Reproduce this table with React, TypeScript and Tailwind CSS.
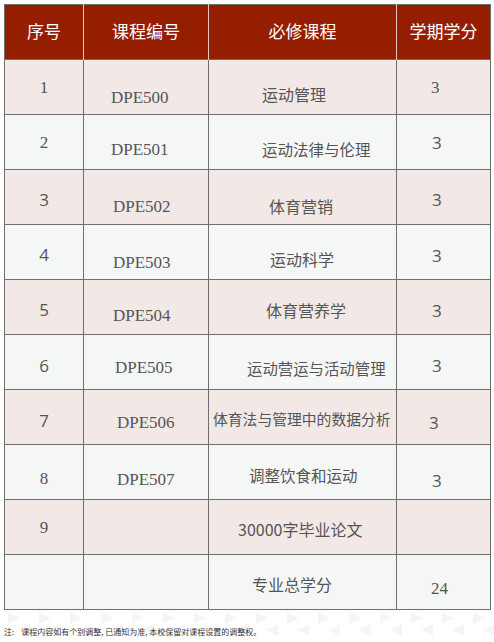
import React from 'react';

type Course = {
  no: string;
  code: string;
  name: string;
  credit: string;
  bg: string;
  noCls: string;
  codeCls: string;
  nameCls: string;
  creditCls: string;
};

const serif = 'font-["Liberation_Serif","Noto_Sans_CJK_SC",serif]';
const sans = 'font-["Open_Sans","Noto_Sans_CJK_SC",sans-serif]';

// 必修课程列表（偏移按原图微调）
const courses: Course[] = [
  { no: '1', code: 'DPE500', name: '运动管理', credit: '3', bg: 'bg-[#f2e8e6]', noCls: `${serif} pt-[17px]`, codeCls: 'pt-[27px] pl-[27px]', nameCls: 'pt-[23px] pl-[53px] text-[16px]', creditCls: `${serif} pt-[17px] pl-[34px]` },
  { no: '2', code: 'DPE501', name: '运动法律与伦理', credit: '3', bg: 'bg-[#f5f7f6]', noCls: `${serif} pt-[17px]`, codeCls: 'pt-[24px] pl-[27px]', nameCls: 'pt-[23px] pl-[53px] text-[15.5px]', creditCls: `${sans} pt-[17px] pl-[35px]` },
  { no: '3', code: 'DPE502', name: '体育营销', credit: '3', bg: 'bg-[#f2e8e6]', noCls: `${sans} pt-[19px]`, codeCls: 'pt-[26px] pl-[29px]', nameCls: 'pt-[25px] pl-[60px] text-[16px]', creditCls: `${sans} pt-[19px] pl-[35px]` },
  { no: '4', code: 'DPE503', name: '运动科学', credit: '3', bg: 'bg-[#f5f7f6]', noCls: `${sans} pt-[19px]`, codeCls: 'pt-[27px] pl-[29px]', nameCls: 'pt-[23px] pl-[61px] text-[16px]', creditCls: `${sans} pt-[20px] pl-[35px]` },
  { no: '5', code: 'DPE504', name: '体育营养学', credit: '3', bg: 'bg-[#f2e8e6]', noCls: `${sans} pt-[19px]`, codeCls: 'pt-[25px] pl-[29px]', nameCls: 'pt-[19px] pl-[57px] text-[16px]', creditCls: `${sans} pt-[20px] pl-[35px]` },
  { no: '6', code: 'DPE505', name: '运动营运与活动管理', credit: '3', bg: 'bg-[#f5f7f6]', noCls: `${sans} pt-[20px]`, codeCls: 'pt-[22px] pl-[31px]', nameCls: 'pt-[22px] pl-[38px] text-[15.4px]', creditCls: `${sans} pt-[20px] pl-[35px]` },
  { no: '7', code: 'DPE506', name: '体育法与管理中的数据分析', credit: '3', bg: 'bg-[#f2e8e6]', noCls: `${sans} pt-[20px]`, codeCls: 'pt-[22px] pl-[33px]', nameCls: 'pt-[18px] pl-[4px] text-[14.8px]', creditCls: `${sans} pt-[22px] pl-[32px]` },
  { no: '8', code: 'DPE507', name: '调整饮食和运动', credit: '3', bg: 'bg-[#f5f7f6]', noCls: `${serif} pt-[23px]`, codeCls: 'pt-[24px] pl-[33px]', nameCls: 'pt-[19px] pl-[40px] text-[15.5px]', creditCls: `${sans} pt-[25px] pl-[35px]` },
  { no: '9', code: '', name: '30000字毕业论文', credit: '', bg: 'bg-[#f2e8e6]', noCls: `${serif} pt-[17px]`, codeCls: '', nameCls: 'pt-[18px] pl-[29px] text-[16px]', creditCls: '' },
  { no: '', code: '', name: '专业总学分', credit: '24', bg: 'bg-[#f5f7f6]', noCls: '', codeCls: '', nameCls: 'pt-[18px] pl-[43px] text-[16px]', creditCls: `${serif} pt-[23px] pl-[34px]` },
];

const headers = ['序号', '课程编号', '必修课程', '学期学分'];
const widths = ['w-[79px]', 'w-[125px]', 'w-[188px]', 'w-[94px]'];

// 背景的浅色三角纹
const Pattern: React.FC = () => (
  <svg className="absolute inset-0 h-full w-full" viewBox="0 0 494 33" preserveAspectRatio="none">
    {[0, 1, 2, 3, 4, 5, 6, 7, 8, 9, 10, 11, 12, 13, 14, 15].map(i => (
      <g key={i} fill="#f5f5f5">
        <polygon points={`${i * 31 + 8},2 ${i * 31 + 20},8 ${i * 31 + 8},14`} />
        <polygon points={`${i * 31 + 30},14 ${i * 31 + 18},20 ${i * 31 + 30},26`} />
      </g>
    ))}
  </svg>
);

const App: React.FC = () => {
  return (
    <div className={`w-[494px] h-[642px] bg-white ${sans} overflow-hidden`}>
      <div className="pt-[4px] pl-[4px]">
        <table className="table-fixed border-collapse w-[486px] border border-[#6e6e6e]">
          <thead>
            <tr className="bg-[#951e00] h-[55px]">
              {headers.map((h, i) => (
                <th
                  key={h}
                  className={`${widths[i]} p-0 border-x border-[#e9c9bf] text-white font-normal text-[17px] leading-[22px] text-center align-middle ${i === 0 ? 'border-l-[#6e6e6e]' : ''} ${i === 3 ? 'border-r-[#6e6e6e]' : ''}`}
                >
                  {h}
                </th>
              ))}
            </tr>
          </thead>
          <tbody>
            {courses.map((c, idx) => (
              <tr key={idx} className={`${c.bg} h-[55px] text-[#555555]`}>
                <td className="p-0 align-top border border-[#6e6e6e]">
                  <div className={`h-[54px] text-center text-[17px] leading-[22px] ${c.noCls}`}>{c.no}</div>
                </td>
                <td className="p-0 align-top border border-[#6e6e6e]">
                  <div className={`h-[54px] text-[17px] leading-[22px] ${serif} ${c.codeCls}`}>{c.code}</div>
                </td>
                <td className="p-0 align-top border border-[#6e6e6e]">
                  <div className={`h-[54px] leading-[22px] whitespace-nowrap font-["Noto_Sans_CJK_SC",sans-serif] ${c.nameCls}`}>{c.name}</div>
                </td>
                <td className="p-0 align-top border border-[#6e6e6e]">
                  <div className={`h-[54px] text-[17px] leading-[22px] ${c.creditCls}`}>{c.credit}</div>
                </td>
              </tr>
            ))}
          </tbody>
        </table>
      </div>
      <div className="relative h-[33px] w-full">
        <Pattern />
        <p className="relative pt-[17px] pl-[4px] text-[8px] leading-[10px] text-[#333333] font-['Noto_Sans_CJK_SC',sans-serif] flex gap-[7px]">
          <span>注:</span>
          <span>课程内容如有个别调整, 已通知为准, 本校保留对课程设置的调整权。</span>
        </p>
      </div>
    </div>
  );
};

export default App;
